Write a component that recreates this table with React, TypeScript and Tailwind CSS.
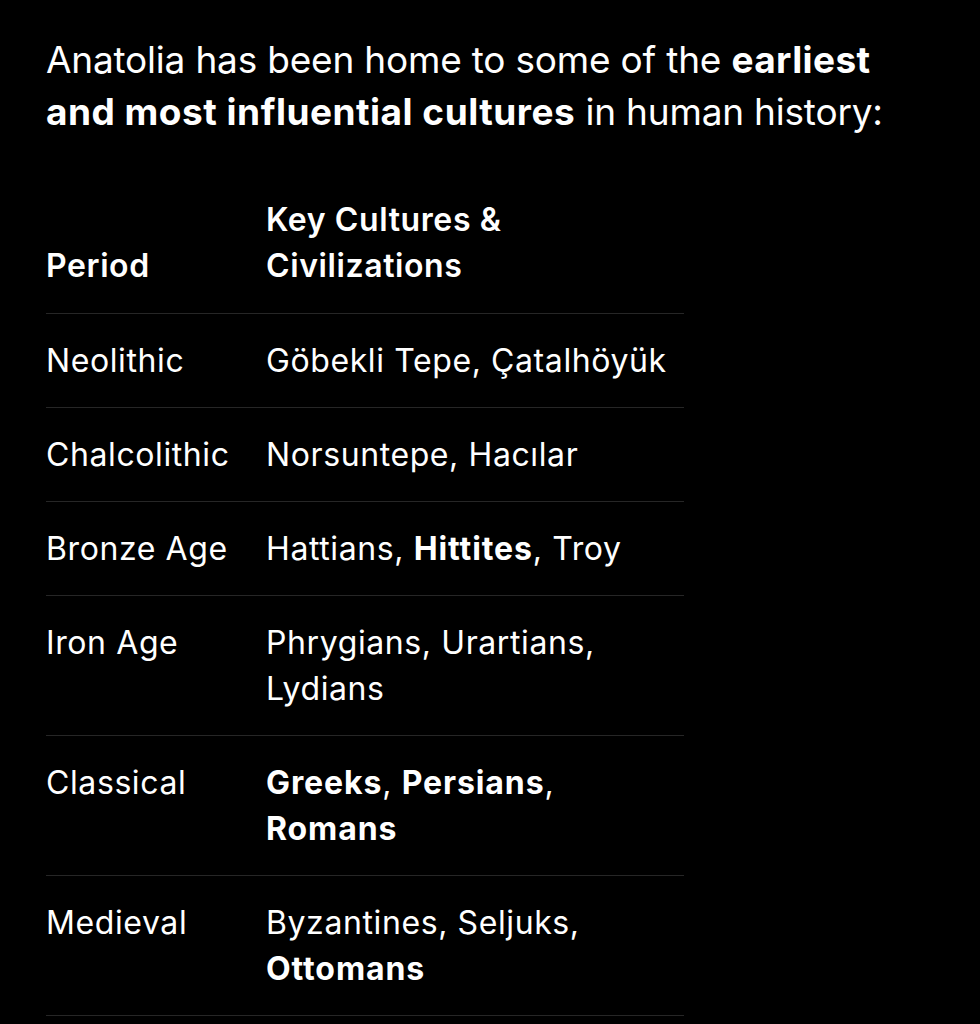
import React from "react"

// rows of the period table
const rows: { period: string; cultures: React.ReactNode }[] = [
  { period: "Neolithic", cultures: "Göbekli Tepe, Çatalhöyük" },
  { period: "Chalcolithic", cultures: "Norsuntepe, Hacılar" },
  {
    period: "Bronze Age",
    cultures: (
      <>
        Hattians, <b className="font-bold tracking-[0.9px]">Hittites</b>, Troy
      </>
    ),
  },
  { period: "Iron Age", cultures: "Phrygians, Urartians, Lydians" },
  {
    period: "Classical",
    cultures: (
      <>
        <b className="font-bold tracking-[0.9px]">Greeks</b>, <b className="font-bold tracking-[0.9px]">Persians</b>,{" "}
        <b className="font-bold tracking-[0.9px]">Romans</b>
      </>
    ),
  },
  {
    period: "Medieval",
    cultures: (
      <>
        Byzantines, Seljuks, <b className="font-bold tracking-[0.9px]">Ottomans</b>
      </>
    ),
  },
]

export default function App() {
  return (
    <div className="min-h-screen bg-black text-white font-['Inter',sans-serif] pl-[46px] pt-[34px]">
      <p className="text-[37px] leading-[52px] tracking-[-0.2px] w-[890px]">
        Anatolia has been home to some of the <b className="font-bold tracking-[0.4px]">earliest</b>{" "}
        <b className="font-bold tracking-[0.5px]">and most influential cultures</b> in human history:
      </p>

      <div className="mt-[59px] w-[638px] text-[32px] leading-[46px] tracking-[0.6px]">
        {/* header */}
        <div className="grid grid-cols-[220px_1fr] items-end pb-[24px] border-b border-[#262626] font-semibold">
          <div>Period</div>
          <div>
            Key Cultures &amp;
            <br />
            Civilizations
          </div>
        </div>

        {rows.map((r) => (
          <div key={r.period} className="grid grid-cols-[220px_1fr] items-start py-[23.5px] border-b border-[#262626]">
            <div>{r.period}</div>
            <div className="pr-[8px]">{r.cultures}</div>
          </div>
        ))}
      </div>
    </div>
  )
}
